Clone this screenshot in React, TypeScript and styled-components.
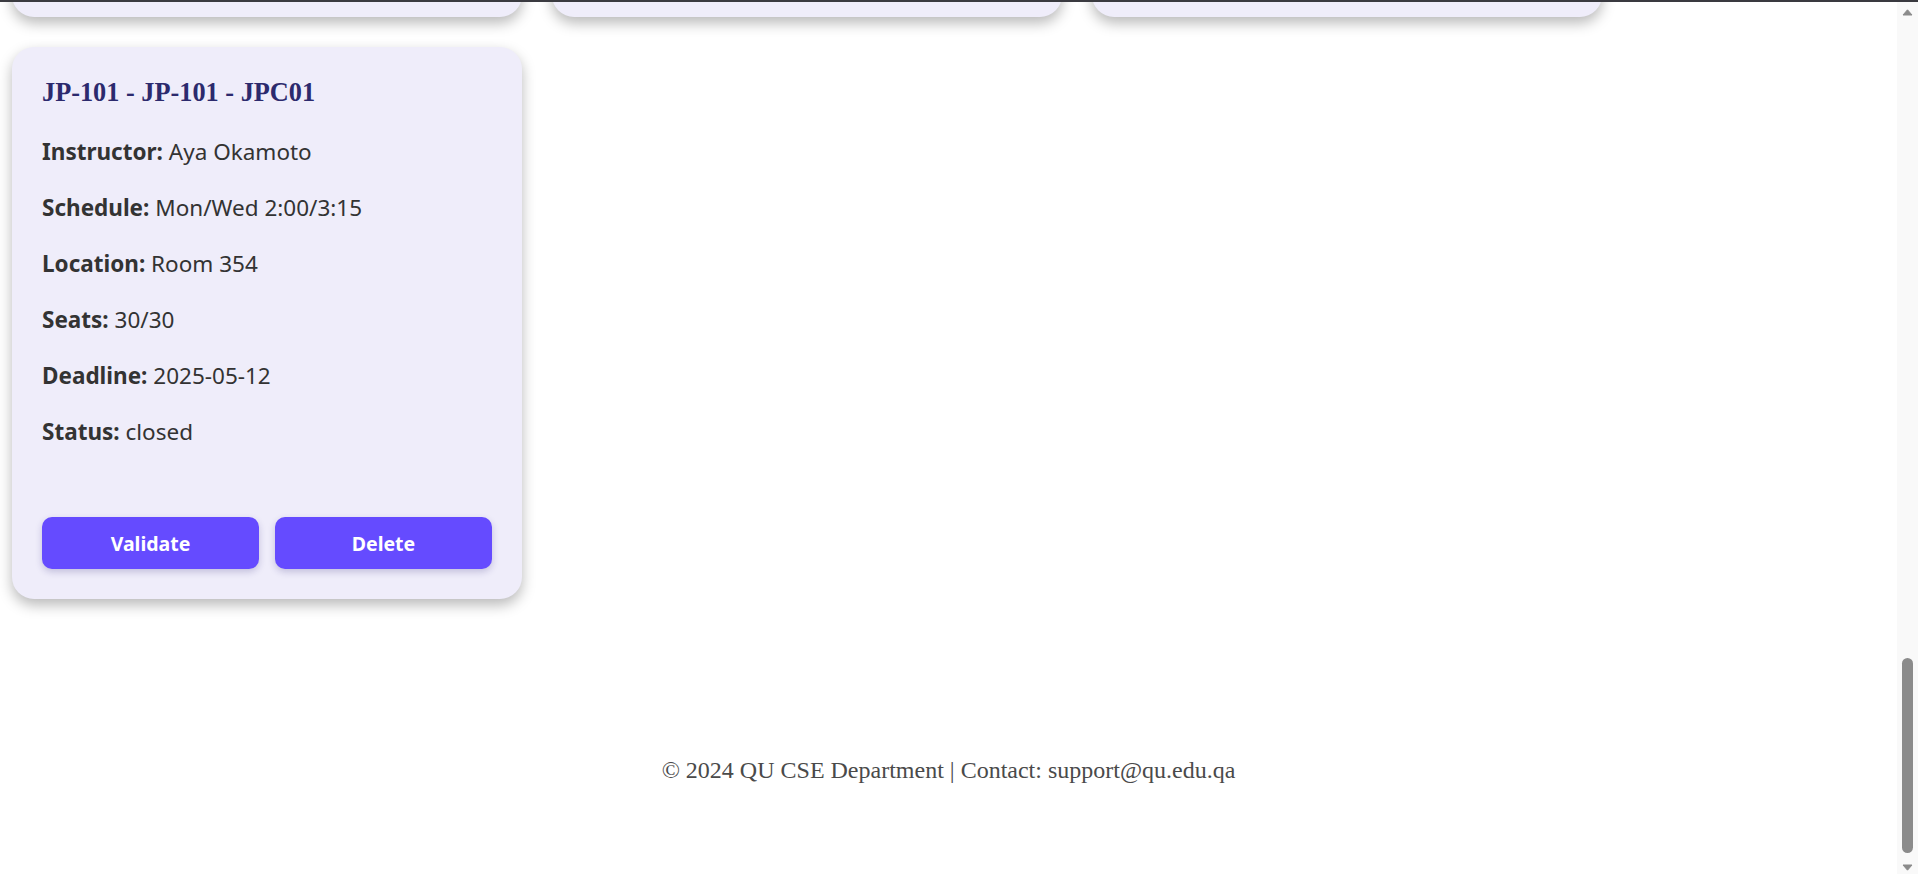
import React from "react";
import styled, { createGlobalStyle } from "styled-components";

const GlobalStyle = createGlobalStyle`
  html, body {
    margin: 0;
    padding: 0;
    background: #ffffff;
    overflow: hidden;
  }
  body {
    font-family: "Segoe UI", "Noto Sans", "Open Sans", sans-serif;
    color: #333333;
  }
`;

const Page = styled.div`
  display: flex;
  flex-direction: column;
  height: 100vh;
`;

const TopEdge = styled.div`
  flex: 0 0 2px;
  background: #3a3a40;
`;

const Window = styled.div`
  flex: 1;
  min-height: 0;
  display: flex;
`;

const Content = styled.div`
  flex: 1;
  min-width: 0;
  display: flex;
  flex-direction: column;
  justify-content: flex-end;
  overflow: hidden;
`;

const Header = styled.header`
  flex: 0 0 auto;
  display: flex;
  align-items: center;
  justify-content: space-between;
  height: 110px;
  padding: 0 40px;
  background: #2c2a6d;
  color: #ffffff;
  font-family: "Liberation Serif", serif;
`;

const Brand = styled.h1`
  margin: 0;
  font-size: 34px;
`;

const Nav = styled.nav`
  display: flex;
  gap: 32px;
  font-size: 22px;
`;

const Main = styled.main`
  flex: 0 0 auto;
  display: flex;
  flex-direction: column;
`;

const PageTitle = styled.h2`
  margin: 0;
  height: 300px;
  display: flex;
  align-items: center;
  padding: 0 42px;
  font-family: "Liberation Serif", serif;
  font-size: 36px;
  color: #2c2a6d;
`;

const Grid = styled.section`
  display: grid;
  grid-template-columns: repeat(3, 510px);
  column-gap: 30px;
  row-gap: 30px;
  padding: 0 12px;
`;

const Card = styled.article`
  display: flex;
  flex-direction: column;
  padding: 30px;
  background: #efedfa;
  border-radius: 22px;
  box-shadow: 0 6px 14px rgba(0, 0, 0, 0.28);
`;

const CardTitle = styled.h3`
  margin: 0 0 29px;
  font-family: "Liberation Serif", "Times New Roman", serif;
  font-size: 26.3px;
  line-height: 32px;
  font-weight: 700;
  color: #2c2a6d;
  white-space: nowrap;
`;

const Fields = styled.div`
  display: flex;
  flex-direction: column;
  gap: 28px;
`;

const Field = styled.p`
  margin: 0;
  font-size: 22.5px;
  line-height: 28px;
  color: #333333;
  white-space: nowrap;
`;

const Label = styled.strong`
  font-weight: 700;
`;

const Actions = styled.div`
  display: grid;
  grid-template-columns: 1fr 1fr;
  gap: 16px;
  margin-top: 71px;
`;

const ActionButton = styled.button`
  height: 52px;
  border: none;
  border-radius: 10px;
  background: #654bff;
  color: #ffffff;
  font-family: "Segoe UI", "Noto Sans", "Open Sans", sans-serif;
  font-size: 19.5px;
  font-weight: 700;
  box-shadow: 0 3px 7px rgba(40, 30, 120, 0.22);
  cursor: pointer;
`;

const Footer = styled.footer`
  flex: 0 0 auto;
  margin-top: 157px;
  padding-bottom: 90px;
  text-align: center;
  font-family: "Liberation Serif", "Times New Roman", serif;
  font-size: 24px;
  line-height: 28px;
  color: #4a4a4a;
`;

const ScrollRail = styled.div`
  flex: 0 0 21px;
  display: flex;
  flex-direction: column;
  align-items: center;
  background: #f9f9f9;
`;

const RailArrow = styled.div<{ $size: number }>`
  flex: 0 0 ${(p) => p.$size}px;
  display: flex;
  align-items: center;
  justify-content: center;
`;

const Track = styled.div`
  flex: 1;
  display: flex;
  flex-direction: column;
  justify-content: flex-end;
  padding-bottom: 7px;
`;

const Thumb = styled.div`
  width: 11px;
  height: 195px;
  border-radius: 6px;
  background: #8b8b8b;
`;

type Course = {
  title: string;
  instructor: string;
  schedule: string;
  location: string;
  seats: string;
  deadline: string;
  status: string;
};

const courses: Course[] = [
  { title: "CMPS-151 - CMPS-151 - L01", instructor: "Omar Khalil", schedule: "Sun/Tue 8:00/9:15", location: "Room 101", seats: "24/30", deadline: "2025-05-10", status: "open" },
  { title: "CMPS-151 - CMPS-151 - L02", instructor: "Sara Ahmed", schedule: "Mon/Wed 9:30/10:45", location: "Room 102", seats: "28/30", deadline: "2025-05-10", status: "open" },
  { title: "CMPS-251 - CMPS-251 - L01", instructor: "Ali Hassan", schedule: "Sun/Tue 11:00/12:15", location: "Room 210", seats: "30/30", deadline: "2025-05-11", status: "closed" },
  { title: "CMPS-303 - CMPS-303 - L01", instructor: "Mona Saleh", schedule: "Mon/Wed 1:00/2:15", location: "Room 214", seats: "18/25", deadline: "2025-05-11", status: "open" },
  { title: "CMPS-350 - CMPS-350 - L01", instructor: "Abdulla Ali", schedule: "Sun/Tue 2:00/3:15", location: "Room 220", seats: "25/25", deadline: "2025-05-12", status: "closed" },
  { title: "CMPS-405 - CMPS-405 - L01", instructor: "Khaled Nasser", schedule: "Mon/Wed 11:00/12:15", location: "Room 301", seats: "12/30", deadline: "2025-05-12", status: "open" },
  { title: "MATH-101 - MATH-101 - M01", instructor: "Laila Yousef", schedule: "Sun/Tue 9:30/10:45", location: "Room 118", seats: "30/35", deadline: "2025-05-10", status: "open" },
  { title: "MATH-211 - MATH-211 - M01", instructor: "Hamad Jaber", schedule: "Mon/Wed 8:00/9:15", location: "Room 119", seats: "35/35", deadline: "2025-05-11", status: "closed" },
  { title: "ENGL-203 - ENGL-203 - E01", instructor: "Emily Carter", schedule: "Sun/Tue 12:30/1:45", location: "Room 240", seats: "20/25", deadline: "2025-05-12", status: "open" },
  { title: "AR-101 - AR-101 - ARC01", instructor: "Noor Fahad", schedule: "Sun/Tue 3:30/4:45", location: "Room 150", seats: "30/30", deadline: "2025-05-12", status: "closed" },
  { title: "FR-101 - FR-101 - FRC01", instructor: "Claire Martin", schedule: "Mon/Wed 12:30/1:45", location: "Room 352", seats: "16/30", deadline: "2025-05-12", status: "open" },
  { title: "KR-101 - KR-101 - KRC01", instructor: "Min-ji Park", schedule: "Sun/Tue 2:00/3:15", location: "Room 353", seats: "22/30", deadline: "2025-05-12", status: "open" },
  { title: "JP-101 - JP-101 - JPC01", instructor: "Aya Okamoto", schedule: "Mon/Wed 2:00/3:15", location: "Room 354", seats: "30/30", deadline: "2025-05-12", status: "closed" },
];

const CourseCard = ({ course }: { course: Course }) => (
  <Card>
    <CardTitle>{course.title}</CardTitle>
    <Fields>
      <Field><Label>Instructor:</Label> {course.instructor}</Field>
      <Field><Label>Schedule:</Label> {course.schedule}</Field>
      <Field><Label>Location:</Label> {course.location}</Field>
      <Field><Label>Seats:</Label> {course.seats}</Field>
      <Field><Label>Deadline:</Label> {course.deadline}</Field>
      <Field><Label>Status:</Label> {course.status}</Field>
    </Fields>
    <Actions>
      <ActionButton type="button">Validate</ActionButton>
      <ActionButton type="button">Delete</ActionButton>
    </Actions>
  </Card>
);

const Triangle = ({ down }: { down?: boolean }) => (
  <svg width="11" height="7" viewBox="0 0 11 7" aria-hidden="true">
    <path
      d={down ? "M1 1 L10 1 L5.5 6.2 Z" : "M1 6 L10 6 L5.5 0.8 Z"}
      fill="#8b8b8b"
      stroke="#8b8b8b"
      strokeWidth="1"
      strokeLinejoin="round"
    />
  </svg>
);

export default function App() {
  return (
    <>
      <GlobalStyle />
      <Page>
        <TopEdge />
        <Window>
          <Content>
            <Header>
              <Brand>QU Course Registration</Brand>
              <Nav>
                <span>Courses</span>
                <span>Classes</span>
                <span>Logout</span>
              </Nav>
            </Header>
            <Main>
              <PageTitle>Manage Classes</PageTitle>
              <Grid>
                {courses.map((c) => (
                  <CourseCard key={c.title} course={c} />
                ))}
              </Grid>
            </Main>
            <Footer>© 2024 QU CSE Department | Contact: support@qu.edu.qa</Footer>
          </Content>
          <ScrollRail aria-hidden="true">
            <RailArrow $size={20}>
              <Triangle />
            </RailArrow>
            <Track>
              <Thumb />
            </Track>
            <RailArrow $size={14}>
              <Triangle down />
            </RailArrow>
          </ScrollRail>
        </Window>
      </Page>
    </>
  );
}
